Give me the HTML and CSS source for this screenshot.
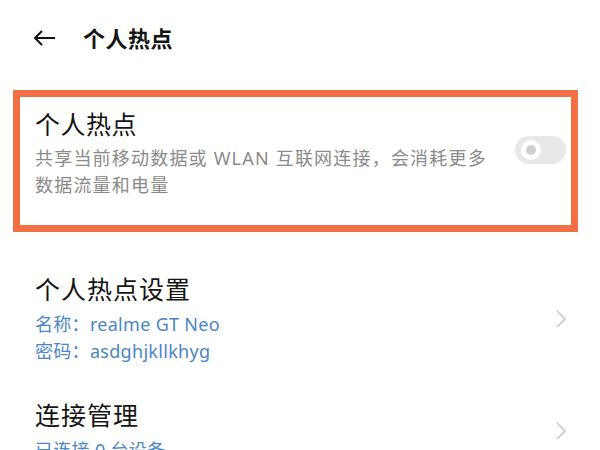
FILE: index.html
```html
<!DOCTYPE html>
<html lang="zh-CN">
<head>
  <meta charset="UTF-8">
  <title>个人热点</title>
  <link rel="stylesheet" href="styles.css">
</head>
<body>

<div class="page">
  <!-- 顶部标题栏 -->
  <div class="topbar">
    <svg class="back" width="23" height="16" viewBox="0 0 23 16">
      <path d="M22 8H2M9 1L2 8l7 7" fill="none" stroke="#111" stroke-width="2"/>
    </svg>
    <span class="topbar-title">个人热点</span>
  </div>

  <!-- 热点开关 -->
  <div class="hotspot-box">
    <div class="item-text">
      <div class="item-title">个人热点</div>
      <div class="item-desc">共享当前移动数据或 WLAN 互联网连接，会消耗更多数据流量和电量</div>
    </div>
    <div class="switch">
      <span class="knob"></span>
    </div>
  </div>

  <div class="row first">
    <div class="item-text">
      <div class="item-title wide">个人热点设置</div>
      <div class="item-info">名称：realme GT Neo</div>
      <div class="item-info">密码：asdghjkllkhyg</div>
    </div>
    <svg class="chevron" width="10" height="18" viewBox="0 0 10 18">
      <path d="M1 1l8 8-8 8" fill="none" stroke="#c4c4c4" stroke-width="1.5"/>
    </svg>
  </div>

  <div class="row">
    <div class="item-text">
      <div class="item-title wide">连接管理</div>
      <div class="item-info">已连接 0 台设备</div>
    </div>
    <svg class="chevron" width="10" height="18" viewBox="0 0 10 18">
      <path d="M1 1l8 8-8 8" fill="none" stroke="#c4c4c4" stroke-width="1.5"/>
    </svg>
  </div>
</div>

</body>
</html>
```

FILE: styles.css
```css
body {
  margin: 0;
  background: #fff;
  font-family: "Noto Sans", "Noto Sans CJK SC", sans-serif;
  color: #151515;
}

.page {
  width: 600px;
  height: 450px;
  overflow: hidden;
}

.topbar {
  height: 75px;
  display: flex;
  align-items: center;
  padding-left: 33px;
  gap: 27px;
}

.back {
  display: block;
}

.topbar-title {
  font-size: 22px;
  font-weight: 700;
  line-height: 30px;
  letter-spacing: 0.5px;
}

.hotspot-box {
  box-sizing: border-box;
  margin: 15px 0 0 13px;
  width: 565px;
  border: 7px solid #f26f43;
  padding: 10px 5px 26px 15px;
  display: flex;
  align-items: flex-start;
  justify-content: space-between;
}

.item-title {
  font-size: 25px;
  line-height: 34px;
  letter-spacing: 0.5px;
}

.item-title.wide {
  letter-spacing: 1px;
}

.item-desc {
  margin-top: 4px;
  width: 460px;
  font-size: 18px;
  line-height: 27px;
  letter-spacing: 1.2px;
  color: #8a8a8a;
}

.switch {
  margin-top: 29px;
  width: 51px;
  height: 28px;
  border-radius: 14px;
  background: #e8e8e8;
  display: flex;
  align-items: center;
  padding-left: 6px;
  box-sizing: border-box;
}

.knob {
  width: 10px;
  height: 10px;
  border-radius: 50%;
  background: #cfcfcf;
  border: 5px solid #fff;
}

.row {
  display: flex;
  align-items: center;
  justify-content: space-between;
  padding: 0 34px 0 35px;
  margin-top: 33px;
}

.row.first {
  margin-top: 40px;
}

.item-info {
  font-size: 18px;
  line-height: 27px;
  letter-spacing: 0.3px;
  color: #4a86c6;
}

.item-title + .item-info {
  margin-top: 5px;
}

.chevron {
  display: block;
}
```
